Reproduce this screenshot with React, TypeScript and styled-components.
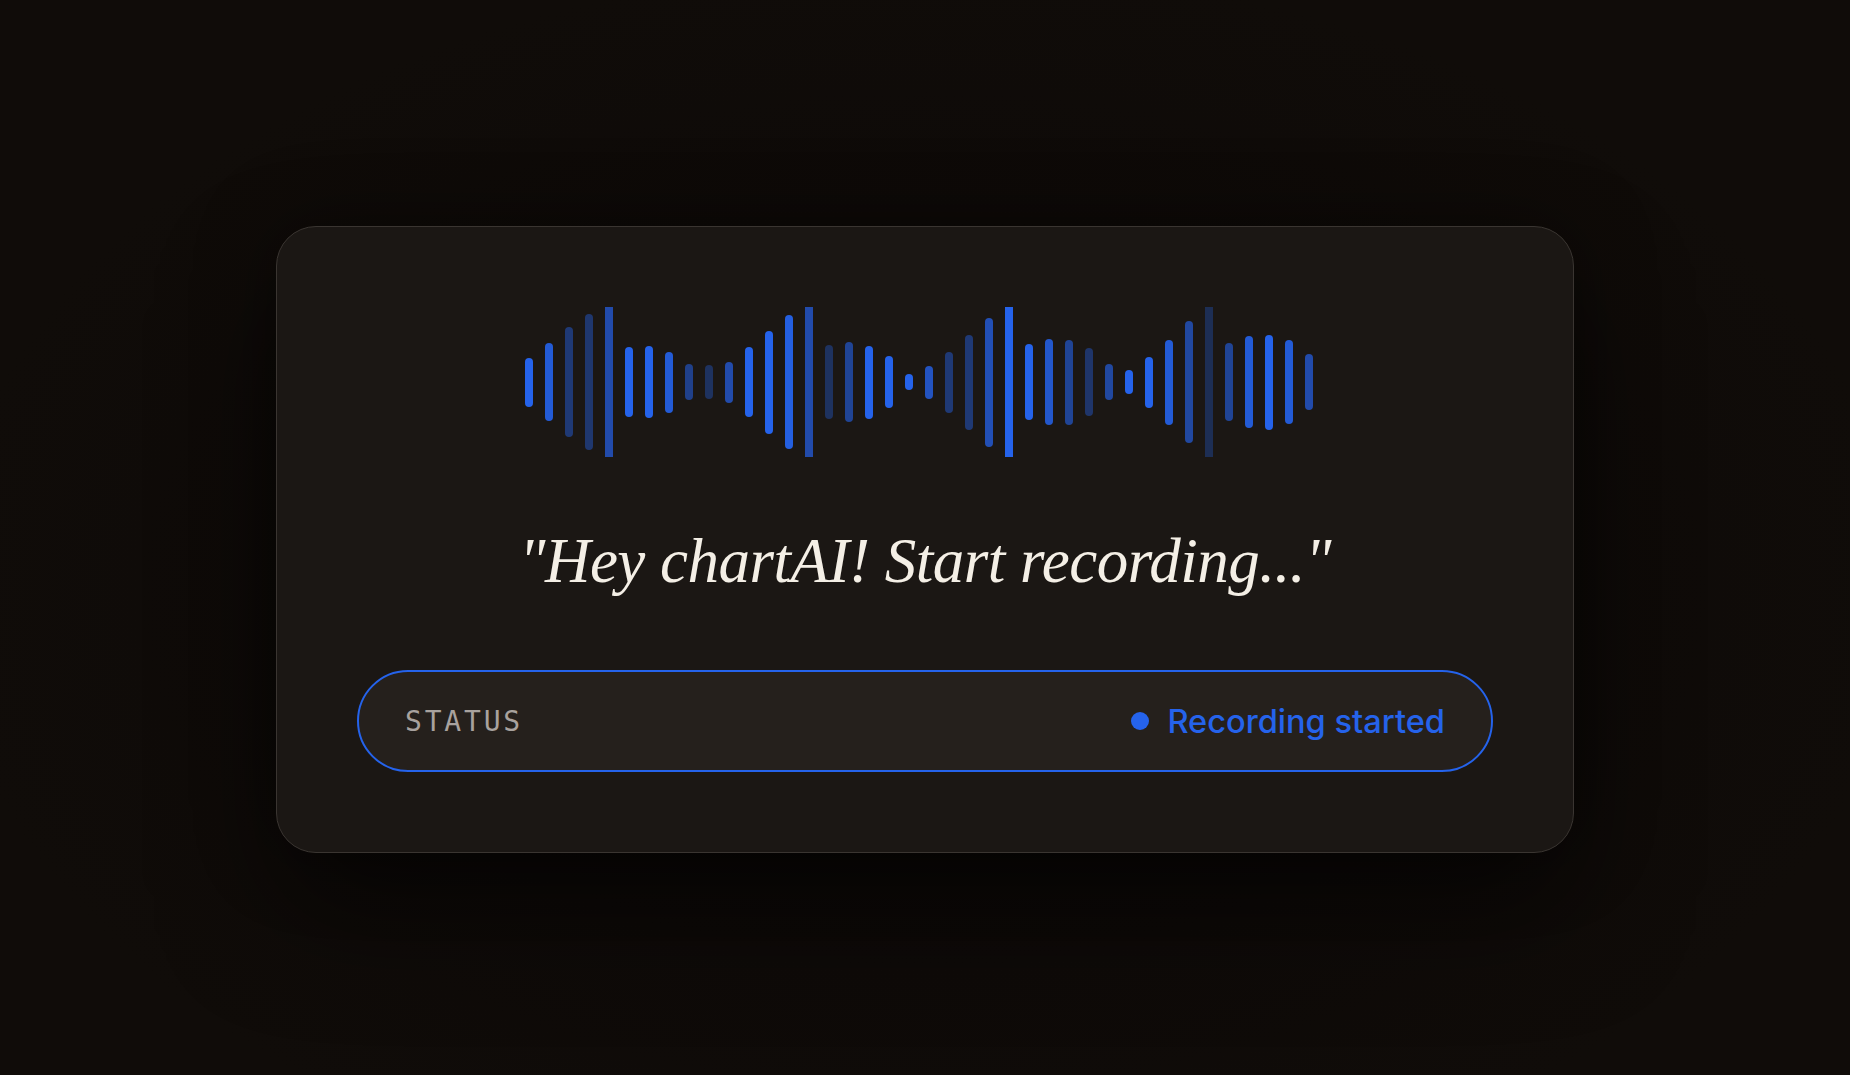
import React from "react";
import styled, { createGlobalStyle } from "styled-components";

const GlobalStyle = createGlobalStyle`
  html, body {
    margin: 0;
    padding: 0;
    background: #0f0c09;
  }
  * { box-sizing: border-box; }
`;

const Page = styled.main`
  min-height: 100vh;
  padding-top: 4px;
  display: flex;
  align-items: center;
  justify-content: center;
  background: radial-gradient(ellipse at 50% 55%, #0b0806 0%, #0e0a08 45%, #100c09 75%);
`;

const Card = styled.section`
  width: 1298px;
  padding: 80px;
  border: 1px solid #3a3531;
  border-radius: 40px;
  background: #1b1714;
  box-shadow: 0 60px 120px -10px rgba(0, 0, 0, 0.55), 0 0 80px rgba(0, 0, 0, 0.35);
  display: flex;
  flex-direction: column;
  align-items: center;
`;

const Wave = styled.div`
  height: 150px;
  display: flex;
  align-items: center;
  gap: 12px;
  padding-right: 12px;
  overflow: hidden;
`;

const Bar = styled.span<{ $h: number; $o: number }>`
  display: block;
  flex: none;
  width: 8px;
  height: ${(p) => p.$h}px;
  border-radius: 4px;
  background: #2563eb;
  opacity: ${(p) => p.$o};
`;

const Quote = styled.p`
  margin: 73px 0 77px;
  font-family: "Liberation Serif", "DejaVu Serif", serif;
  font-style: italic;
  font-weight: 400;
  font-size: 63px;
  line-height: 1;
  letter-spacing: -0.5px;
  color: #f4efe6;
  text-align: center;
  white-space: nowrap;
`;

const StatusPill = styled.div`
  width: 100%;
  height: 102px;
  padding: 0 46px;
  border: 2px solid #2563eb;
  border-radius: 999px;
  background: #25201c;
  display: flex;
  align-items: center;
  justify-content: space-between;
`;

const StatusLabel = styled.span`
  font-family: "DejaVu Sans Mono", "Liberation Mono", monospace;
  font-size: 28px;
  letter-spacing: 2.8px;
  color: #a8a29e;
  text-transform: uppercase;
`;

const StatusValue = styled.span`
  display: flex;
  align-items: center;
  gap: 18px;
  font-family: Inter, "Noto Sans", sans-serif;
  font-weight: 500;
  font-size: 32.6px;
  color: #2563eb;
`;

const Dot = styled.span`
  width: 18px;
  height: 18px;
  border-radius: 50%;
  background: #2563eb;
`;

const bars: [number, number][] = [
  [49, 1], [78, 0.9], [110, 0.45], [136, 0.42], [170, 0.7],
  [70, 1], [72, 1], [61, 0.9], [36, 0.55], [34, 0.35],
  [41, 0.7], [70, 1], [103, 1], [134, 0.95], [170, 0.7],
  [74, 0.35], [80, 0.6], [73, 1], [52, 1], [16, 1],
  [33, 0.8], [61, 0.45], [95, 0.45], [129, 0.75], [170, 1],
  [76, 1], [86, 0.85], [85, 0.6], [68, 0.4], [36, 0.65],
  [24, 1], [51, 1], [85, 0.9], [122, 0.65], [170, 0.3],
  [78, 0.6], [92, 0.9], [95, 1], [84, 0.9], [56, 0.7],
];

export default function App() {
  return (
    <>
      <GlobalStyle />
      <Page>
        <Card>
          <Wave>
            {bars.map(([h, o], i) => (
              <Bar key={i} $h={h} $o={o} />
            ))}
          </Wave>
          <Quote>"Hey chartAI! Start recording..."</Quote>
          <StatusPill>
            <StatusLabel>Status</StatusLabel>
            <StatusValue>
              <Dot />
              Recording started
            </StatusValue>
          </StatusPill>
        </Card>
      </Page>
    </>
  );
}
